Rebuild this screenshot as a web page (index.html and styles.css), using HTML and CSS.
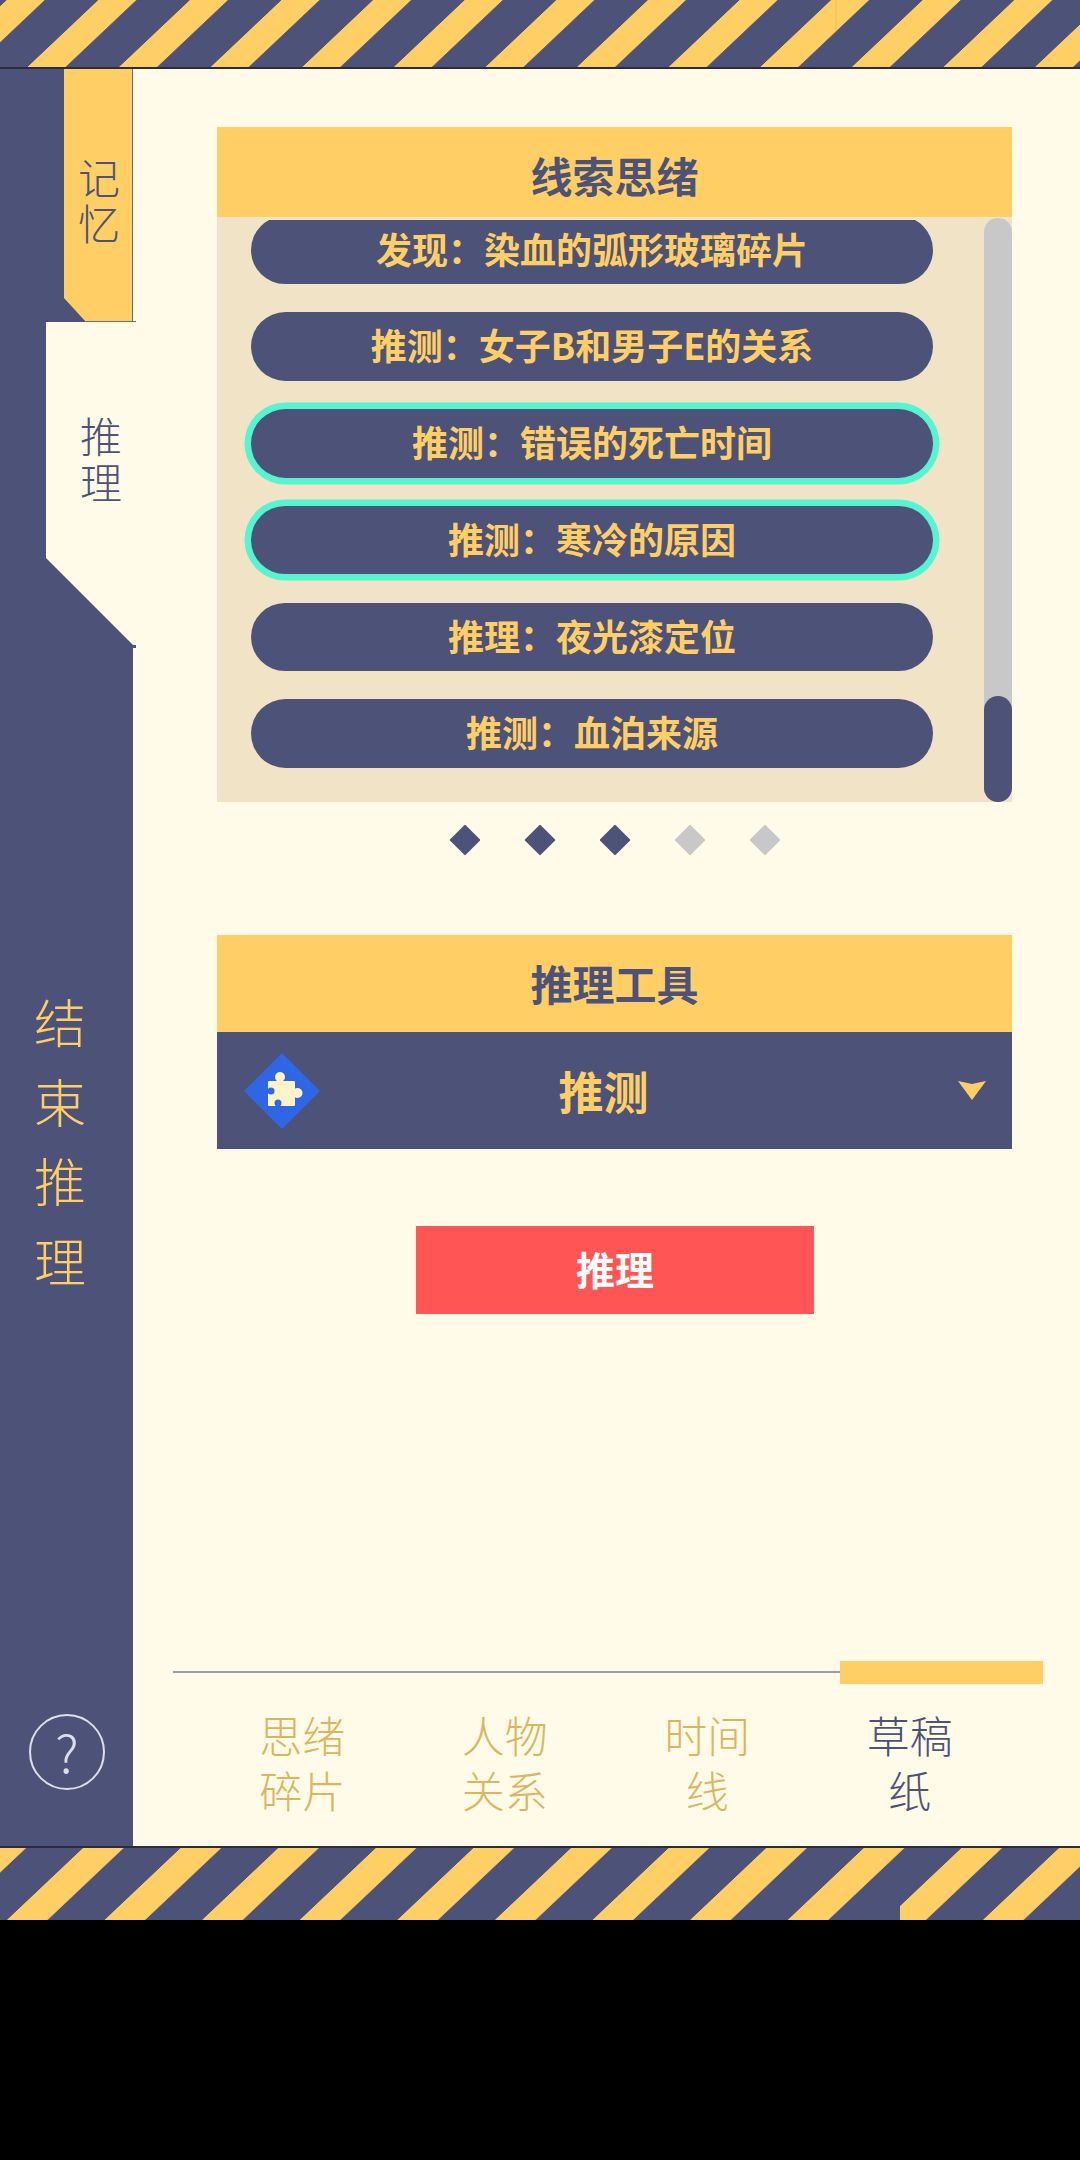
FILE: index.html
```html
<!DOCTYPE html>
<html lang="zh-CN">
<head>
<meta charset="utf-8">
<title>推理</title>
<link rel="stylesheet" href="styles.css">
</head>
<body>
<div class="screen">
  <header class="stripes stripes-top">
    <svg width="1080" height="67" viewBox="0 0 1080 67" aria-hidden="true">
      <defs>
        <pattern id="hazardTop" width="91.6" height="200" patternUnits="userSpaceOnUse" patternTransform="translate(27.5 67) skewX(-46.6)">
          <rect width="38" height="200" fill="#ffcf66"/>
        </pattern>
      </defs>
      <rect width="1080" height="67" fill="#4d5378"/>
      <rect width="1080" height="67" fill="url(#hazardTop)"/>
      <rect x="835.500" width="1" height="30" fill="#e6bf63"/>
    </svg>
  </header>
  <div class="middle">
    <aside class="sidebar">
      <div class="tab tab-memory"><span>记<br>忆</span></div>
      <div class="tab tab-active"><span>推<br>理</span></div>
      <div class="finish">结<br>束<br>推<br>理</div>
      <div class="help">?</div>
    </aside>
    <main class="content">
      <section class="panel">
        <h2 class="panel-title title-clues">线索思绪</h2>
        <div class="clue-body">
          <div class="clue-list">
            <div class="pill pill-first">发现：染血的弧形玻璃碎片</div>
            <div class="pill">推测：女子B和男子E的关系</div>
            <div class="pill selected">推测：错误的死亡时间</div>
            <div class="pill selected">推测：寒冷的原因</div>
            <div class="pill">推理：夜光漆定位</div>
            <div class="pill">推测：血泊来源</div>
          </div>
          <div class="scrollbar"><div class="thumb"></div></div>
        </div>
      </section>
      <div class="dots">
        <i class="dot on"></i><i class="dot on"></i><i class="dot on"></i><i class="dot"></i><i class="dot"></i>
      </div>
      <section class="panel">
        <h2 class="panel-title title-tools">推理工具</h2>
        <div class="tool-select">
          <span class="tool-icon">
            <svg width="76" height="76" viewBox="0 0 76 76" aria-hidden="true">
              <polygon points="38,0 76,38 38,76 0,38" fill="#2f66e6"/>
              <g fill="#fff3c9">
                <rect x="24" y="28" width="27" height="25" rx="1"/>
                <circle cx="36" cy="24" r="5"/>
                <rect x="33.500" y="26" width="5" height="4"/>
                <circle cx="53.500" cy="40" r="5"/>
                <rect x="49" y="37.500" width="3" height="5"/>
              </g>
              <g fill="#2f66e6">
                <circle cx="27" cy="38" r="3.500"/>
                <rect x="22" y="36.500" width="3" height="3"/>
                <circle cx="34" cy="50" r="3.500"/>
                <rect x="32.500" y="52" width="3" height="2"/>
              </g>
            </svg>
          </span>
          <span class="tool-name">推测</span>
          <svg class="caret" width="28" height="19" viewBox="0 0 28 19" aria-hidden="true"><polygon points="0,0 14,3 28,0 14,19" fill="#ffcf66"/></svg>
        </div>
      </section>
      <button class="deduce" type="button">推理</button>
      <nav class="bottom-nav">
        <div class="nav-rule"><div class="nav-marker"></div></div>
        <div class="nav-tabs">
          <div class="nav-tab">思绪<br>碎片</div>
          <div class="nav-tab">人物<br>关系</div>
          <div class="nav-tab">时间<br>线</div>
          <div class="nav-tab current">草稿<br>纸</div>
        </div>
      </nav>
    </main>
  </div>
  <footer class="stripes stripes-bottom">
    <svg width="1080" height="72" viewBox="0 0 1080 72" aria-hidden="true">
      <defs>
        <pattern id="hazardBottom" width="97.6" height="200" patternUnits="userSpaceOnUse" patternTransform="translate(6.900 72) skewX(-46.6)">
          <rect width="40.600" height="200" fill="#ffcf66"/>
        </pattern>
      </defs>
      <rect width="1080" height="72" fill="#4d5378"/>
      <rect width="1080" height="72" fill="url(#hazardBottom)"/>
      <polygon points="900,57 900,72 884,72" fill="#4d5378"/>
    </svg>
  </footer>
</div>
</body>
</html>
```

FILE: styles.css
```css
* { box-sizing: border-box; }
html, body { margin: 0; padding: 0; background: #000; }
body { font-family: "Noto Sans CJK SC", "Noto Sans", sans-serif; width: 1080px; height: 2160px; overflow: hidden; }
.screen { display: flex; flex-direction: column; width: 1080px; height: 1920px; }
.stripes svg { display: block; }
.stripes-top { height: 69px; border-bottom: 2px solid #2b2c3c; }
.stripes-bottom { height: 74px; border-top: 2px solid #2b2c3c; }
.middle { display: flex; height: 1777px; background: #fffbe8; }

.sidebar { width: 133px; flex: none; background: #4d5378; display: flex; flex-direction: column; align-items: flex-start; position: relative; }
.sidebar::before { content: ""; position: absolute; left: 133px; top: 252px; width: 3px; height: 1px; background: #6d6d78; }
.sidebar::after { content: ""; position: absolute; left: 133px; top: 576px; width: 3px; height: 3px; background: #4d5378; z-index: 2; }
.tab { display: flex; text-align: center; font-size: 42px; line-height: 46px; color: #4d5378; font-weight: 300; }
.tab-memory { margin-left: 64px; width: 69px; height: 253px; background: #ffcf66; border-right: 1px solid #6d6d78; border-bottom: 1px solid #6d6d78; padding: 84px 0 0 14px; clip-path: polygon(0 0, 100% 0, 100% 100%, 22px 100%, 0 229px); }
.tab-active { margin-left: 46px; width: 90px; height: 326px; background: #fffbe8; padding: 90px 0 0 34px; clip-path: polygon(0 0, 100% 0, 100% 100%, 0 236px); position: relative; z-index: 1; }
.finish { margin-top: 333px; width: 120px; text-align: center; font-size: 52px; line-height: 79.5px; font-weight: 300; color: #ffcf66; }
.help { margin: 415px 0 0 29px; width: 76px; height: 76px; border: 2px solid #dcdfe9; border-radius: 50%; color: #dcdfe9; font-size: 52px; font-weight: 300; line-height: 70px; text-align: center; }

.content { flex: 1; min-width: 0; display: flex; flex-direction: column; align-items: flex-start; padding: 58px 0 0 84px; position: relative; }
.panel { width: 795px; flex: none; }
.panel-title { margin: 0; background: #ffcf66; color: #4d5378; font-size: 42px; font-weight: 700; text-align: center; }
.title-clues { height: 90px; line-height: 96px; }
.title-tools { height: 97px; line-height: 96px; }

.clue-body { height: 585px; background: #f0e3c6; display: flex; padding-top: 3px; position: relative; }
.clue-list { width: 767px; overflow: hidden; padding-left: 34px; display: flex; flex-direction: column; gap: 28.250px; }
.pill { width: 682px; height: 68.500px; flex: none; border-radius: 35px; background: #4d5378; color: #ffcf66; font-size: 36px; font-weight: 700; line-height: 64px; text-align: center; }
.pill-first { margin-top: -4.500px; }
.pill.selected { box-shadow: 0 0 0 6.500px #55f5d2; }
.scrollbar { width: 28px; height: 584px; margin-top: -2px; background: #c8c8c8; border-radius: 14px; display: flex; align-items: flex-end; }
.thumb { width: 28px; height: 106px; border-radius: 14px; background: #4d5378; }

.dots { display: flex; gap: 53px; margin: 27px 0 0 237px; height: 106px; }
.dot { display: block; width: 22px; height: 22px; transform: rotate(45deg); background: #c8c8c8; border-radius: 1px; }
.dot.on { background: #4d5378; }

.tool-select { height: 117px; background: #4d5378; display: flex; align-items: center; padding-left: 27px; position: relative; }
.tool-icon { display: block; width: 76px; height: 76px; }
.tool-icon svg { display: block; }
.tool-name { flex: 1; text-align: center; color: #ffcf66; font-size: 45px; font-weight: 700; padding-right: 71px; }
.caret { margin-right: 26px; flex: none; }

.deduce { display: block; margin: 77px 0 0 199px; width: 398px; height: 88px; border: 0; background: #ff5555; color: #fff; font-family: inherit; font-size: 39px; font-weight: 700; line-height: 84px; padding: 0 0 4px; }

.bottom-nav { margin: 347px 0 0 -44px; width: 870px; }
.nav-rule { height: 23px; display: flex; align-items: center; background: linear-gradient(#9a9dad, #9a9dad) 0 10px / 668px 2px no-repeat; }
.nav-marker { margin-left: 667px; width: 203px; height: 23px; background: #ffcf66; }
.nav-tabs { display: flex; margin: 23px 0 0 28px; }
.nav-tab { width: 202.500px; text-align: center; color: #dcb55f; font-size: 43px; font-weight: 300; line-height: 55px; }
.nav-tab.current { color: #4d5378; }
```
